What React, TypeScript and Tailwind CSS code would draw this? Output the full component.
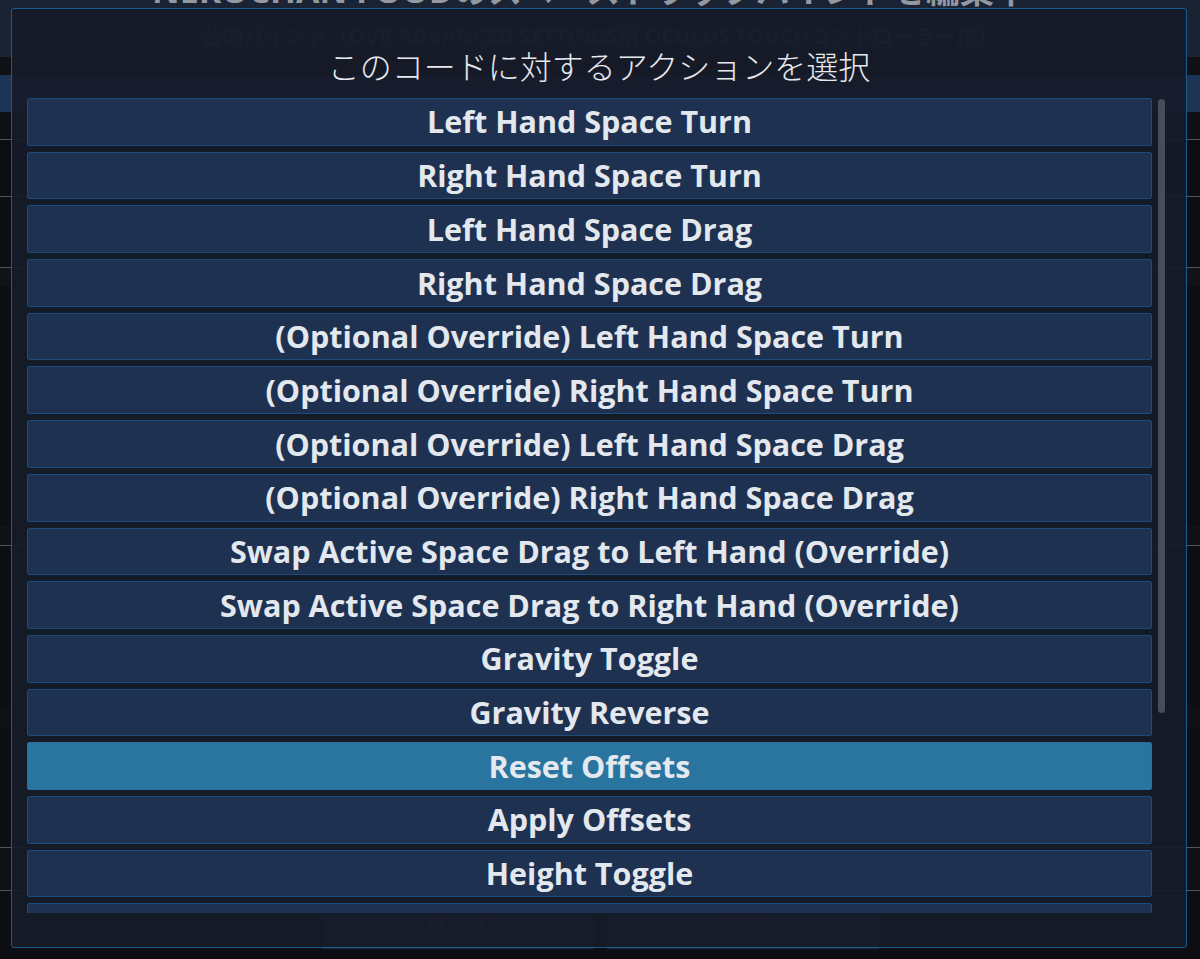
import React from "react";

const items = [
  "Left Hand Space Turn",
  "Right Hand Space Turn",
  "Left Hand Space Drag",
  "Right Hand Space Drag",
  "(Optional Override) Left Hand Space Turn",
  "(Optional Override) Right Hand Space Turn",
  "(Optional Override) Left Hand Space Drag",
  "(Optional Override) Right Hand Space Drag",
  "Swap Active Space Drag to Left Hand (Override)",
  "Swap Active Space Drag to Right Hand (Override)",
  "Gravity Toggle",
  "Gravity Reverse",
  "Reset Offsets",
  "Apply Offsets",
  "Height Toggle",
  "Height Reverse",
  "Lock X Toggle",
];

function Background() {
  return (
    <div className="flex h-full w-full flex-col bg-[#0c0e13]">
      <div className="flex h-[57px] shrink-0 flex-col items-center overflow-hidden bg-[#1a2333]">
        <div className="mt-[-30px] ml-[-20px] whitespace-nowrap text-[34px] font-bold leading-[40px] text-[#9398a1] [font-family:'Open_Sans','Noto_Sans_CJK_JP',sans-serif]">
          NEKOCHAN FOODのスペーストラップバインドを編集中
        </div>
        <div className="mt-[17px] whitespace-nowrap text-[21px] font-bold leading-[18px] text-[#454c59] [font-family:'Open_Sans','Noto_Sans_CJK_JP',sans-serif]">
          公開バインド（OVR ADVANCED SETTINGS用 OCULUS TOUCHコントローラー用）
        </div>
      </div>
      <div className="h-[18px] bg-[#101116]" />
      <div className="h-[37px] bg-[#1c3554]" />
      <div className="h-[28px] border-b border-[#4f5564] bg-[#0f1015]" />
      <div className="h-[57px] border-b border-[#4f5564] bg-[#0c0d12]" />
      <div className="h-[71px] border-b border-[#4f5564] bg-[#0d0e13]" />
      <div className="h-[18px] bg-[#121318]" />
      <div className="h-[240px] bg-[#0c0e13]" />
      <div className="h-[20px] border-b border-[#4f5564] bg-[#111217]" />
      <div className="h-[160px] bg-[#0c0e13]" />
      <div className="h-[22px] bg-[#101116]" />
      <div className="h-[120px] border-b border-[#4f5564] bg-[#0c0e13]" />
      <div className="flex h-[43px] border-b border-[#4f5564] bg-[#101116]" />
      <div className="flex flex-1 items-start justify-center gap-[13px] pt-[10px]">
        <div className="flex h-[48px] w-[272px] items-center justify-center bg-[#1c2a40] text-[22px] font-bold text-[#3c4452] [font-family:'Open_Sans','Noto_Sans_CJK_JP',sans-serif]">
          リーズ
        </div>
        <div className="flex h-[48px] w-[272px] items-center justify-center bg-[#1c2a40] text-[22px] font-bold text-[#3c4452] [font-family:'Open_Sans','Noto_Sans_CJK_JP',sans-serif]">
          保存
        </div>
      </div>
    </div>
  );
}

export default function App() {
  return (
    <div className="relative h-[959px] w-[1200px] overflow-hidden">
      <Background />
      <div className="absolute left-[11px] top-[8px] flex h-[940px] w-[1176px] flex-col rounded-[3px] border border-[#1b5a8e] bg-[#171b29]/93">
        <div className="flex h-[89px] shrink-0 items-start justify-center pt-[38px]">
          <div className="text-[32px] font-light leading-[36px] text-[#e6e9ee] [font-family:'Noto_Sans_CJK_JP',sans-serif]">
            このコードに対するアクションを選択
          </div>
        </div>
        <div className="flex h-[815px] shrink-0 gap-[6px] pl-[15px]">
          <div className="flex w-[1125px] flex-col gap-[6px] overflow-hidden">
            {items.map((t, i) => {
              const sel = i === 12;
              return (
                <div
                  key={t}
                  className={
                    sel
                      ? "flex h-[47.7px] shrink-0 items-center justify-center rounded-[2px] border border-[#2b6f9a] bg-[#2a74a0] pt-[1px] text-[30.5px] font-bold text-[#e3e9ee] [font-family:'Open_Sans',sans-serif]"
                      : "flex h-[47.7px] shrink-0 items-center justify-center rounded-[2px] border border-[#1b4c7b] bg-[#1f3353]/95 pt-[1px] text-[30.5px] font-bold text-[#e3e8ee] [font-family:'Open_Sans',sans-serif]"
                  }
                >
                  {t}
                </div>
              );
            })}
          </div>
          <div className="flex w-[7px] flex-col pt-[1px]">
            <div className="h-[614px] w-[7px] rounded-full bg-[#484d5c]" />
          </div>
        </div>
      </div>
    </div>
  );
}
